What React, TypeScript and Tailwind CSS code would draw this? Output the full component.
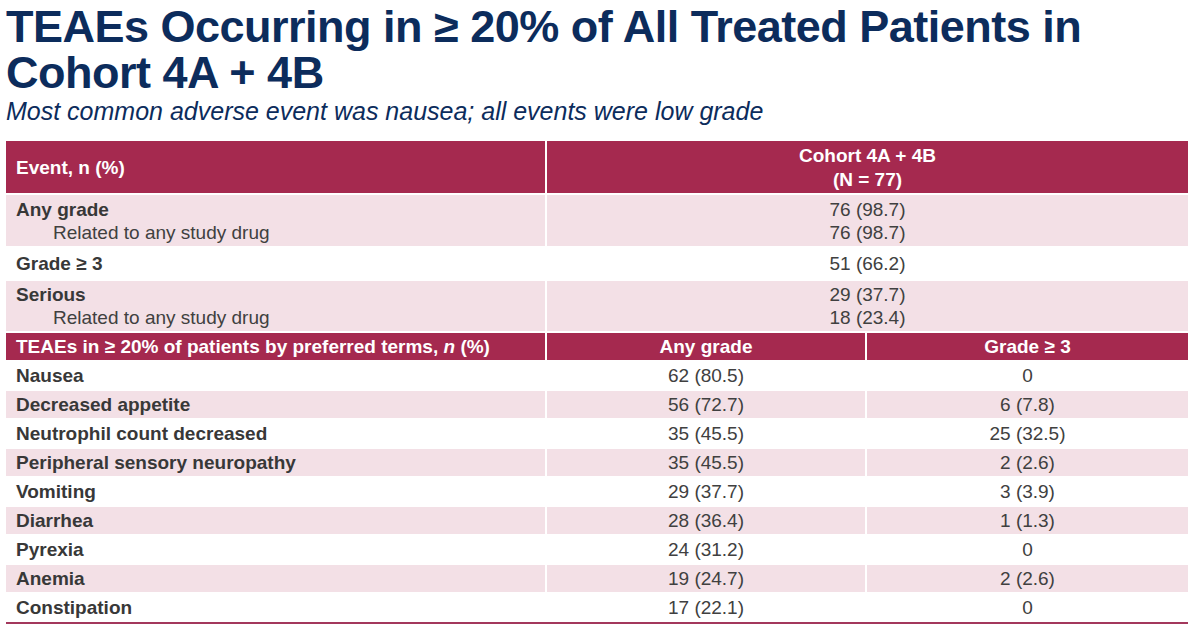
import type { ReactNode } from "react";

const font = "font-['Liberation_Sans',Arial,sans-serif]";

interface TermRow {
  term: string;
  any: string;
  high: string;
}

const terms: TermRow[] = [
  { term: "Nausea", any: "62 (80.5)", high: "0" },
  { term: "Decreased appetite", any: "56 (72.7)", high: "6 (7.8)" },
  { term: "Neutrophil count decreased", any: "35 (45.5)", high: "25 (32.5)" },
  { term: "Peripheral sensory neuropathy", any: "35 (45.5)", high: "2 (2.6)" },
  { term: "Vomiting", any: "29 (37.7)", high: "3 (3.9)" },
  { term: "Diarrhea", any: "28 (36.4)", high: "1 (1.3)" },
  { term: "Pyrexia", any: "24 (31.2)", high: "0" },
  { term: "Anemia", any: "19 (24.7)", high: "2 (2.6)" },
  { term: "Constipation", any: "17 (22.1)", high: "0" },
];

function Cell({
  children,
  tone,
  center,
  className = "",
}: {
  children: ReactNode;
  tone: "head" | "pink" | "white";
  center?: boolean;
  className?: string;
}) {
  const bg =
    tone === "head"
      ? "bg-[#a5294f] text-white font-bold"
      : tone === "pink"
        ? "bg-[#f3e0e6]"
        : "bg-white";
  return (
    <div
      className={`flex flex-col justify-center ${bg} ${
        center ? "items-center text-center" : "pl-[10px]"
      } ${className}`}
    >
      {children}
    </div>
  );
}

function SummaryRow({
  label,
  sub,
  value,
  subValue,
  tone,
  h,
}: {
  label: string;
  sub?: string;
  value: string;
  subValue?: string;
  tone: "pink" | "white";
  h: string;
}) {
  return (
    <div className={`grid grid-cols-[539px_1fr] gap-[2px] ${h}`}>
      <Cell tone={tone}>
        <span className="font-bold text-[#383838]">{label}</span>
        {sub && <span className="pl-[37px] text-[#404040]">{sub}</span>}
      </Cell>
      <Cell tone={tone} center>
        <span className="text-[#404040]">{value}</span>
        {subValue && <span className="text-[#404040]">{subValue}</span>}
      </Cell>
    </div>
  );
}

export default function App() {
  return (
    <div className={`w-[1200px] h-[635px] bg-white overflow-hidden ${font}`}>
      <div className="pl-[6px] pt-[4px]">
        <h1 className="text-[45px] leading-[46px] font-bold tracking-[-0.5px] text-[#0c2c5c]">
          TEAEs Occurring in ≥ 20% of All Treated Patients in
          <br />
          Cohort 4A + 4B
        </h1>
        <p className="text-[25px] leading-[30px] italic text-[#0c2c5c]">
          Most common adverse event was nausea; all events were low grade
        </p>
      </div>

      <div className="ml-[6px] mt-[15px] w-[1182px] flex flex-col gap-[2px] text-[19px] leading-[23px]">
        <div className="grid grid-cols-[539px_1fr] gap-[2px] h-[52px]">
          <Cell tone="head">Event, n (%)</Cell>
          <Cell tone="head" center className="leading-[24px] pt-[2px]">
            <span>Cohort 4A + 4B</span>
            <span>(N = 77)</span>
          </Cell>
        </div>

        <SummaryRow
          label="Any grade"
          sub="Related to any study drug"
          value="76 (98.7)"
          subValue="76 (98.7)"
          tone="pink"
          h="h-[51px]"
        />
        <SummaryRow label="Grade ≥ 3" value="51 (66.2)" tone="white" h="h-[31px]" />
        <SummaryRow
          label="Serious"
          sub="Related to any study drug"
          value="29 (37.7)"
          subValue="18 (23.4)"
          tone="pink"
          h="h-[50px]"
        />

        <div className="grid grid-cols-[539px_318px_1fr] gap-[2px] h-[27px]">
          <Cell tone="head">
            <span>
              TEAEs in ≥ 20% of patients by preferred terms, <i>n</i> (%)
            </span>
          </Cell>
          <Cell tone="head" center>
            Any grade
          </Cell>
          <Cell tone="head" center>
            Grade ≥ 3
          </Cell>
        </div>

        {terms.map((r, i) => {
          const tone = i % 2 === 1 ? "pink" : "white";
          return (
            <div
              key={r.term}
              className="grid grid-cols-[539px_318px_1fr] gap-[2px] h-[27px]"
            >
              <Cell tone={tone}>
                <span className="font-bold text-[#383838]">{r.term}</span>
              </Cell>
              <Cell tone={tone} center>
                <span className="text-[#404040]">{r.any}</span>
              </Cell>
              <Cell tone={tone} center>
                <span className="text-[#404040]">{r.high}</span>
              </Cell>
            </div>
          );
        })}
        <div className="h-[2px] bg-[#a3385c] -mt-[1px]" />
      </div>
    </div>
  );
}
